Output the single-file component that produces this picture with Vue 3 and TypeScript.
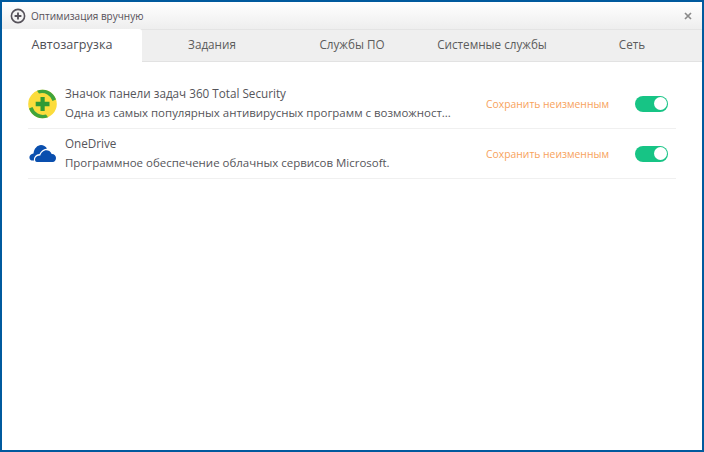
<script setup lang="ts">
const tabs = [
  { label: 'Автозагрузка', active: true },
  { label: 'Задания', active: false },
  { label: 'Службы ПО', active: false },
  { label: 'Системные службы', active: false },
  { label: 'Сеть', active: false },
]
const rows = [
  { id: '360', title: 'Значок панели задач 360 Total Security', desc: 'Одна из самых популярных антивирусных программ с возможност...' },
  { id: 'od', title: 'OneDrive', desc: 'Программное обеспечение облачных сервисов Microsoft.' },
]
</script>

<template>
  <div class="win">
    <header class="titlebar">
      <svg class="plus" width="16" height="16" viewBox="0 0 16 16">
        <circle cx="8" cy="8" r="6.600" fill="#f4f4f4" stroke="#56525a" stroke-width="1.600" />
        <path d="M8 4.600v6.800M4.600 8h6.800" stroke="#56525a" stroke-width="1.800" />
      </svg>
      <span class="wintitle">Оптимизация вручную</span>
      <svg class="close" width="8" height="8" viewBox="0 0 8 8">
        <path d="M1 1l6 6M7 1l-6 6" stroke="#8a8a8a" stroke-width="1.700" />
      </svg>
    </header>
    <nav class="tabs">
      <div v-for="t in tabs" :key="t.label" class="tab" :class="{ active: t.active }">{{ t.label }}</div>
    </nav>
    <main class="list">
      <div v-for="r in rows" :key="r.id" class="row">
        <svg v-if="r.id === '360'" class="icon" width="30" height="30" viewBox="0 0 30 30">
          <circle cx="14.500" cy="15" r="14.300" fill="#fbdc3c" />
          <path d="M9 1.800A14.300 14.300 0 0 1 28 10.500L24.500 12A11 11 0 0 0 11 4.500Z" fill="#3fa43c" />
          <path d="M20 28.200A14.300 14.300 0 0 1 1 19.500L4.500 18A11 11 0 0 0 18 25.500Z" fill="#3fa43c" />
          <path d="M12.500 8h4.200v4.800h4.800v4.400h-4.800V22h-4.200v-4.800H7.700v-4.400h4.800Z" fill="#2f9a35" />
        </svg>
        <svg v-else class="icon" width="30" height="30" viewBox="0 0 30 30">
          <path d="M3.500 21.500C.5 20.500.5 15 5.500 14.500 6 9.500 9.500 6 13 6c2.500 0 4.500 1.200 6 3.500-4 .5-6.500 3-7.500 5.500-3.500.2-6 3-5.500 6.500Z" fill="#0a4fae" />
          <path d="M9 23c-2.800 0-2.800-5.800 1.500-6.300l1.800-.1c.6-3.700 5-7 9-4.700 1.300.8 2 1.900 2.300 3.100 2.500-.3 4.400 1.700 4.400 4 0 2.300-1.300 4-3.300 4Z" fill="#0a4fae" />
        </svg>
        <div class="text">
          <div class="title">{{ r.title }}</div>
          <div class="desc">{{ r.desc }}</div>
        </div>
        <span class="keep">Сохранить неизменным</span>
        <div class="toggle"><span class="knob"></span></div>
      </div>
    </main>
  </div>
</template>

<style>
html, body { margin: 0; background: #fff; }
</style>

<style scoped>
.win {
  box-sizing: border-box;
  width: 704px;
  height: 452px;
  border: 2px solid #005a9e;
  background: #fff;
  font-family: "Open Sans", "Noto Sans", sans-serif;
  overflow: hidden;
}
.titlebar {
  height: 27px;
  display: flex;
  align-items: center;
  padding: 1px 10px 0 8px;
  background: linear-gradient(#ffffff, #eeeeee);
  box-sizing: border-box;
}
.plus { flex: none; }
.wintitle {
  margin-left: 5px;
  font-size: 10px;
  color: #555058;
}
.close { margin-left: auto; }
.tabs {
  height: 33px;
  display: grid;
  grid-template-columns: repeat(5, 140px);
  background: #efefef;
  border-top: 1px solid #e4e4e4;
  border-bottom: 1px solid #e2e2e2;
  box-sizing: border-box;
}
.tab {
  display: flex;
  align-items: center;
  justify-content: center;
  font-size: 11.700px;
  color: #5c5c5c;
  padding-bottom: 3px;
  white-space: nowrap;
}
.tab.active {
  background: #fff;
  color: #4f4f55;
  font-size: 12.600px;
  margin: -1px 0 -1px;
  border-radius: 0 3px 0 0;
}
.list { padding: 17px 26px 0 26px; }
.row {
  height: 50px;
  display: flex;
  align-items: center;
  border-bottom: 1px solid #f0f0f0;
  box-sizing: border-box;
}
.icon { flex: none; margin: 0 7px 0 0; }
.text { flex: 1; min-width: 0; padding-bottom: 2px; }
.title, .desc {
  line-height: 19px;
  color: #55555a;
  white-space: nowrap;
}
.title { font-size: 11.700px; }
.desc { font-size: 11.480px; }
.keep {
  font-size: 10.350px;
  color: #f7a25c;
  margin-right: 26px;
}
.toggle {
  width: 33px;
  height: 16px;
  margin-right: 8px;
  border-radius: 8px;
  background: #17c485;
  display: flex;
  justify-content: flex-end;
  align-items: center;
  padding-right: 1px;
  box-sizing: border-box;
}
.knob {
  width: 13px;
  height: 13px;
  border-radius: 50%;
  background: #fff;
}
</style>
